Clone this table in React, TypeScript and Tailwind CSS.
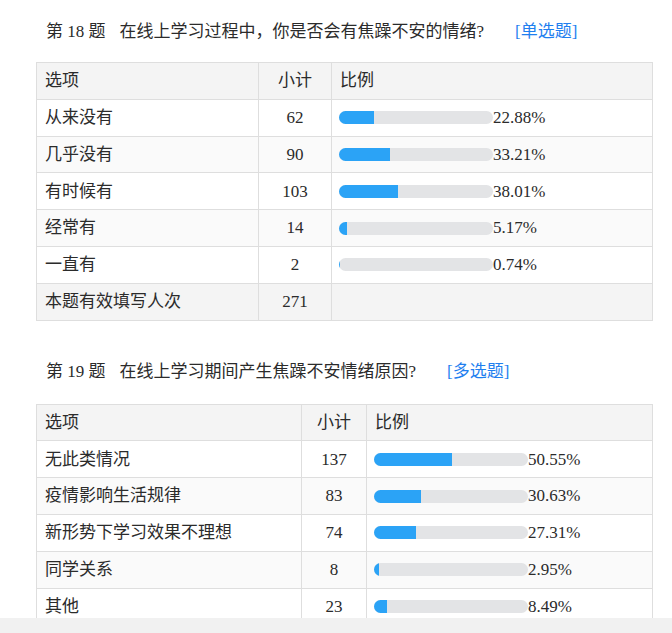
import React from 'react';

type Row = { label: string; count: number; pct: number };

const q18: Row[] = [
  { label: '从来没有', count: 62, pct: 22.88 },
  { label: '几乎没有', count: 90, pct: 33.21 },
  { label: '有时候有', count: 103, pct: 38.01 },
  { label: '经常有', count: 14, pct: 5.17 },
  { label: '一直有', count: 2, pct: 0.74 },
];

const q19: Row[] = [
  { label: '无此类情况', count: 137, pct: 50.55 },
  { label: '疫情影响生活规律', count: 83, pct: 30.63 },
  { label: '新形势下学习效果不理想', count: 74, pct: 27.31 },
  { label: '同学关系', count: 8, pct: 2.95 },
  { label: '其他', count: 23, pct: 8.49 },
];

// 进度条 + 百分比
function Bar({ pct }: { pct: number }) {
  return (
    <div className="flex items-center">
      <div className="h-[13px] w-[154px] overflow-hidden rounded-full bg-[#e3e4e6]">
        <div className="h-full bg-[#2ba3f6]" style={{ width: `${pct}%` }} />
      </div>
      <span>{pct.toFixed(2)}%</span>
    </div>
  );
}

function StatTable({ rows, total, cols }: { rows: Row[]; total?: number; cols: string }) {
  return (
    <div className="w-[617px] border-l border-t border-r border-[#dedede]">
      {/* 表头 */}
      <div className={`grid h-[36.8px] border-b border-[#dedede] bg-[#f4f4f4] ${cols}`}>
        <div className="flex items-center border-r border-[#dedede] pl-2">选项</div>
        <div className="flex items-center justify-center border-r border-[#dedede]">小计</div>
        <div className="flex items-center pl-2">比例</div>
      </div>
      {rows.map((r, i) => (
        <div
          key={r.label}
          className={`grid h-[36.8px] border-b border-[#dedede] ${cols} ${i % 2 === 1 ? 'bg-[#fafafa]' : 'bg-white'}`}
        >
          <div className="flex items-center border-r border-[#dedede] pl-2">{r.label}</div>
          <div className="flex items-center justify-center border-r border-[#dedede]">{r.count}</div>
          <div className="flex items-center pl-[7px]">
            <Bar pct={r.pct} />
          </div>
        </div>
      ))}
      {total !== undefined && (
        <div className={`grid h-[36.8px] border-b border-[#dedede] bg-[#f4f4f4] ${cols}`}>
          <div className="flex items-center border-r border-[#dedede] pl-2">本题有效填写人次</div>
          <div className="flex items-center justify-center border-r border-[#dedede]">{total}</div>
          <div />
        </div>
      )}
    </div>
  );
}

function Title({ no, text, tag }: { no: number; text: string; tag: string }) {
  return (
    <div className="flex h-6 items-center pl-[10px] leading-6">
      <span>第 {no} 题</span>
      <span className="ml-[14px]">{text}</span>
      <span className="ml-[31px] text-[#1f7fef]">[{tag}]</span>
    </div>
  );
}

export default function App() {
  return (
    <div
      className="flex h-[633px] w-[672px] flex-col bg-[#f1f1f1] text-[17px] text-[#2b2b2b]"
      style={{ fontFamily: '"Liberation Serif", "Noto Sans CJK SC", serif' }}
    >
      <div className="h-[618px] overflow-hidden bg-white pl-9 pt-5">
        <Title no={18} text="在线上学习过程中，你是否会有焦躁不安的情绪?" tag="单选题" />
        <div className="mt-[18px]">
          <StatTable rows={q18} total={271} cols="grid-cols-[222px_73px_1fr]" />
        </div>

        <div className="mt-[39px]">
          <Title no={19} text="在线上学习期间产生焦躁不安情绪原因?" tag="多选题" />
        </div>
        <div className="mt-5">
          <StatTable rows={q19} cols="grid-cols-[265px_65px_1fr]" />
        </div>
      </div>
    </div>
  );
}
